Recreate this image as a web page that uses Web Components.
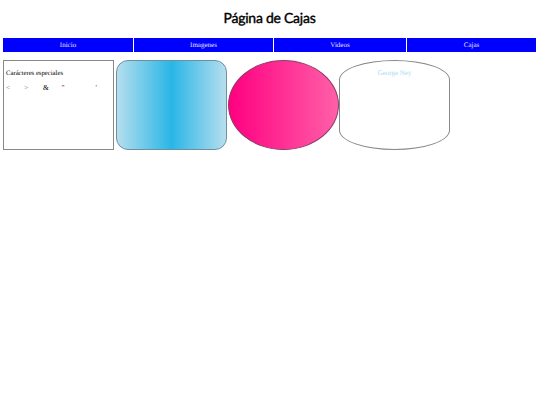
<!DOCTYPE html>
<html lang="es"><head><meta charset="utf-8"><title>Página de Cajas</title>
<style>html,body{margin:0;background:#fff}</style></head>
<body>
<box-page>
  <span slot="title">Página de Cajas</span>
  <nav-bar slot="nav">
    <nav-item style="--w:130px">Inicio</nav-item>
    <nav-item style="--w:139px">Imagenes</nav-item>
    <nav-item style="--w:132px">Videos</nav-item>
    <nav-item style="--w:129px">Cajas</nav-item>
  </nav-bar>
  <special-box slot="boxes"></special-box>
  <shape-box slot="boxes" kind="blue"></shape-box>
  <shape-box slot="boxes" kind="pink"></shape-box>
  <shape-box slot="boxes" kind="ney">George Ney</shape-box>
</box-page>
<script>
function def(name, html){
  customElements.define(name, class extends HTMLElement{
    constructor(){super();this.attachShadow({mode:'open'}).innerHTML=html;}
  });
}
def('box-page',`<style>
:host{display:block;width:540px;height:405px;box-sizing:border-box;padding:0 4px 0 3px;font-family:"Liberation Serif",serif;overflow:hidden;text-rendering:geometricPrecision}
h1{margin:0;height:38px;box-sizing:border-box;padding-top:8px;text-align:center;font:400 14px/20px "Lato",sans-serif;letter-spacing:-.25px;color:#000;-webkit-text-stroke:.4px #000}
.boxes{display:flex;margin-top:8px;align-items:flex-start}
</style><h1><slot name="title"></slot></h1><slot name="nav"></slot><div class="boxes"><slot name="boxes"></slot></div>`);
def('nav-bar',`<style>:host{display:flex;gap:1px;background:#fff;height:14px;width:533px}</style><slot></slot>`);
def('nav-item',`<style>:host{display:block;flex:1 1 var(--w);background:#00f;color:#e4e4f4;font-size:7px;line-height:14px;text-align:center}</style><slot></slot>`);
def('special-box',`<style>
:host{display:block;box-sizing:border-box;width:111px;height:90px;border:1px solid #888;padding:8px 2px;margin-right:2px;font-size:6.7px;color:#000}
p{margin:0;line-height:9px}
.row{display:flex;margin-top:5px;font-size:7.5px;line-height:9px;color:#333}
.row span{display:block}
.a{width:18px}.b{width:19px}.c{width:18.5px;color:#000}.d{width:34px}
</style><p>Carácteres especiales</p><div class="row"><span class="a">&lt;</span><span class="b">&gt;</span><span class="c">&amp;</span><span class="d">"</span><span>'</span></div>`);
def('shape-box',`<style>
:host{display:block;box-sizing:border-box;width:111px;height:90px;border:1px solid #777;font-size:7px;text-align:center;padding-top:8px;line-height:9px;color:#a6dcf0}
:host([kind=blue]){margin-right:1px;border-radius:12px;background:linear-gradient(to right,#b5deee,#29b6e6 50%,#b5deee);border-color:#6f8f9f}
:host([kind=pink]){border-radius:50%;background:linear-gradient(to right,#ff0080,#ff5fa8);border-color:#8a3a6a}
:host([kind=ney]){border-radius:50% / 22%;background:#fff;border-color:#888}
</style><slot></slot>`);
</script>
</body></html>
